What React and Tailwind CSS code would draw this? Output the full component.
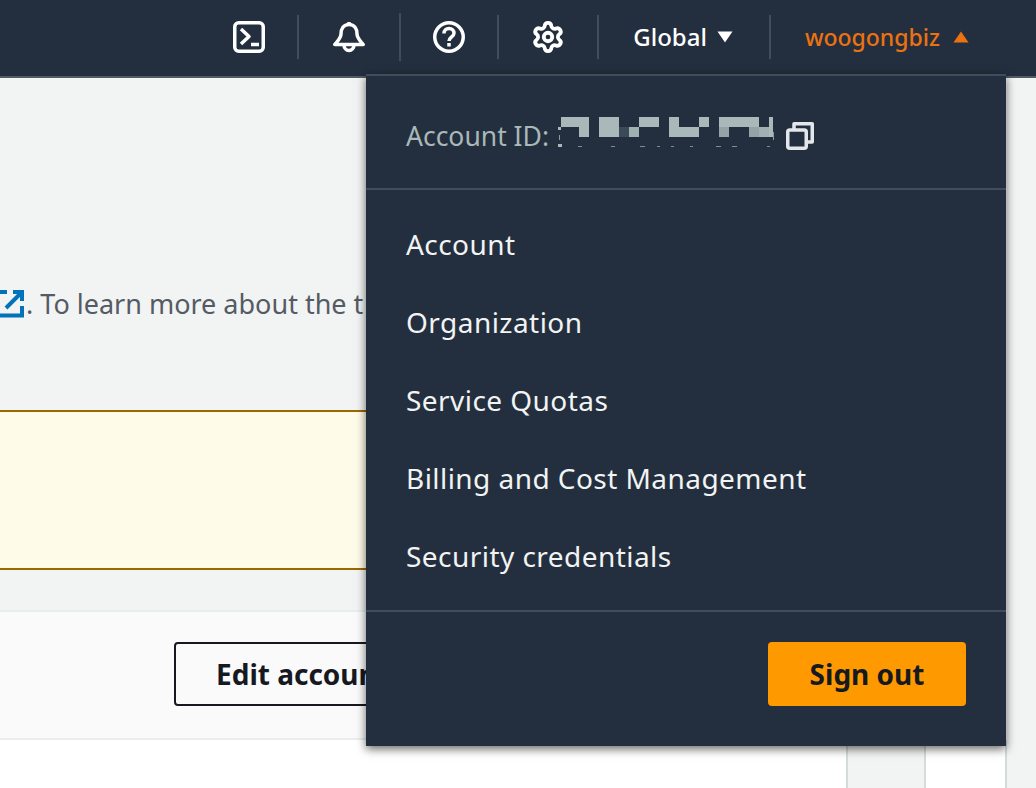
import { Settings } from 'lucide-react';

const REDACTED = [
  // light blocks of the blurred account number
  [3, 0, 18, 10, '#a9b8b8'], [21, 0, 10, 20, '#a9b8b8'],
  [41, 0, 20, 20, '#a9b8b8'], [61, 10, 10, 10, '#3a4a59'], [71, 10, 10, 10, '#9fb0b0'], [81, 0, 20, 10, '#a9b8b8'],
  [111, 0, 10, 20, '#a9b8b8'], [121, 10, 20, 10, '#a9b8b8'], [141, 0, 10, 10, '#a9b8b8'],
  [161, 0, 40, 10, '#a9b8b8'], [161, 10, 10, 10, '#95a3a8'], [191, 10, 10, 10, '#95a3a8'], [201, 10, 10, 10, '#a0afb1'], [211, 0, 4, 20, '#a9b8b8'],
  // bits of the digits left around the blocks
  [0, 10, 3, 3, '#a9b8b8'], [1, 18, 1, 5, '#8d9ba0'], [0, 27, 4, 3, '#a9b8b8'], [215, 15, 1, 8, '#8d9ba0'],
  [20, 29, 4, 1, '#7d8b92'], [53, 29, 4, 1, '#7d8b92'], [82, 29, 5, 1, '#7d8b92'], [99, 29, 3, 1, '#7d8b92'],
  [113, 29, 3, 1, '#7d8b92'], [132, 29, 3, 1, '#7d8b92'], [158, 29, 5, 1, '#7d8b92'], [174, 29, 5, 1, '#7d8b92'], [209, 29, 3, 1, '#7d8b92'],
];

function Divider({ tall }) {
  return <div className={tall ? 'h-[48px] w-[2px] bg-[#414d5c]' : 'h-[44px] w-[2px] bg-[#414d5c]'} />;
}

function Caret({ up, color }) {
  return (
    <svg width="16" height="12" viewBox="0 0 16 12" className={up ? '' : 'rotate-180'}>
      <path d="M8 0.5 L15.5 11.5 H0.5 Z" fill={color} />
    </svg>
  );
}

function TopBar() {
  return (
    <header className="h-[78px] bg-[#232f3e] flex items-start justify-end pr-[67px] border-b-2 border-[#545b64]">
      <div className="flex items-center h-[74px]">
        <svg width="32" height="32" viewBox="0 0 32 32" fill="none" stroke="white" strokeWidth="3.5" strokeLinejoin="round">
          <rect x="1.75" y="1.75" width="28.5" height="28.5" rx="4" />
          <path d="M8 8 L16 15.5 L8 23" />
          <path d="M18 23.5 H26" />
        </svg>
        <div className="ml-[32px]"><Divider /></div>
        <svg width="32" height="32" viewBox="0 0 32 32" fill="none" stroke="white" strokeWidth="3.5" strokeLinejoin="round" className="ml-[34px]">
          <path d="M16 3.5 C10.5 3.5 8 8 8 13 C8 17 5 19.5 1.75 23.5 H30.25 C27 19.5 24 17 24 13 C24 8 21.5 3.5 16 3.5 Z" />
          <path d="M16 1 V3.5" />
          <path d="M11 24 A5 5.5 0 0 0 21 24" />
        </svg>
        <div className="ml-[34px]"><Divider tall /></div>
        <svg width="32" height="32" viewBox="0 0 32 32" fill="none" stroke="white" strokeWidth="3.5" className="ml-[32px]">
          <circle cx="16" cy="16" r="14.25" />
          <path d="M11 12.5 C11 9.5 13.2 7.5 16 7.5 C18.8 7.5 21 9.5 21 12.3 C21 15.8 16 16 16 20" />
          <path d="M14.25 22 H17.75 V25.5 H14.25 Z" fill="white" strokeWidth="0" />
        </svg>
        <div className="ml-[32px]"><Divider /></div>
        <Settings size={34} color="white" strokeWidth={2.7} className="ml-[32px]" />
        <div className="ml-[32px]"><Divider /></div>
        <span className="ml-[34px] text-white text-[24px] font-medium">Global</span>
        <span className="ml-[10px]"><Caret color="white" /></span>
        <div className="ml-[36px]"><Divider /></div>
        <span className="ml-[34px] text-[#ec7211] text-[23px] font-medium">woogongbiz</span>
        <span className="ml-[13px]"><Caret up color="#ec7211" /></span>
      </div>
    </header>
  );
}

function AccountMenu() {
  const items = ['Account', 'Organization', 'Service Quotas', 'Billing and Cost Management', 'Security credentials'];
  return (
    <div className="absolute left-[366px] top-[74px] w-[640px] h-[672px] bg-[#232f3e] border-t-2 border-[#414d5c] shadow-[0_3px_9px_rgba(0,0,0,0.6)] flex flex-col">
      <div className="h-[114px] shrink-0 border-b-2 border-[#414d5c] pl-[40px] flex items-start pt-[38px]">
        <span className="text-[26.5px] leading-[44px] text-[#a9b8b8]">Account ID:</span>
        <svg width="216" height="32" viewBox="0 0 216 32" className="ml-[9px] mt-[3px]">
          {REDACTED.map(([x, y, w, h, fill]) => (
            <rect key={`${x}-${y}`} x={x} y={y} width={w} height={h} fill={fill} />
          ))}
        </svg>
        <svg width="28" height="28" viewBox="0 0 28 28" fill="none" stroke="#e3e7e9" strokeWidth="3.5" strokeLinejoin="round" className="mt-[8px] ml-[12px]">
          <rect x="1.75" y="8" width="18.5" height="18.25" rx="2" />
          <path d="M8 7 V1.75 H26.25 V20 H21" />
        </svg>
      </div>
      <div className="h-[420px] shrink-0 flex flex-col pt-[15px] pl-[40px]">
        {items.map((item) => (
          <div key={item} className="h-[78px] shrink-0 flex items-center text-[#f2f3f3] text-[28px] tracking-[0.45px]">{item}</div>
        ))}
      </div>
      <div className="flex-1 border-t-2 border-[#414d5c] flex justify-end items-start pt-[30px] pr-[40px]">
        <button className="w-[198px] h-[64px] rounded-[4px] bg-[#ff9900] text-[#16191f] text-[28px] font-bold">Sign out</button>
      </div>
    </div>
  );
}

export default function App() {
  return (
    <div className="relative w-[1036px] h-[788px] overflow-hidden bg-white text-[#545b64] font-['Noto_Sans','Open_Sans',sans-serif]">
      <TopBar />
      <main className="flex">
        <div className="w-[1007px] shrink-0">
          <div className="h-[332px] w-[1006px] bg-[#f2f3f3] pt-[198px]">
            <div className="flex items-center h-[56px] text-[27px] whitespace-nowrap">
              <svg width="24" height="28" viewBox="0 0 24 28" fill="none" stroke="#0073bb" strokeWidth="4" className="shrink-0">
                <path d="M0 2 H7 M0 25.5 H22 V16" />
                <path d="M6 18 L21 3 M13 2 H22 V11" />
              </svg>
              <span className="ml-[2px]">. To learn more about the t</span>
            </div>
          </div>
          <div className="h-[160px] w-[1006px] bg-[#fffbe9] border-y-2 border-[#9a6700]" />
          <div className="h-[40px] w-[1006px] bg-[#f2f3f3]" />
          <div className="h-[130px] w-[1006px] bg-[#fafafa] border-y-2 border-[#eaeded] flex items-start pt-[30px] pl-[174px]">
            <button className="w-[300px] h-[64px] rounded-[4px] border-2 border-[#16191f] text-[#16191f] text-[28px] font-bold text-left pl-[40px] whitespace-nowrap">Edit account</button>
          </div>
          <div className="h-[48px] flex justify-end">
            <div className="w-[161px] flex">
              <div className="w-[80px] bg-[#f2f3f3] border-x-2 border-[#d5dbdb]" />
              <div className="w-[81px] border-r-2 border-[#d5dbdb]" />
            </div>
          </div>
        </div>
        <div className="flex-1 bg-[#f2f3f3]" />
      </main>
      <AccountMenu />
    </div>
  );
}
